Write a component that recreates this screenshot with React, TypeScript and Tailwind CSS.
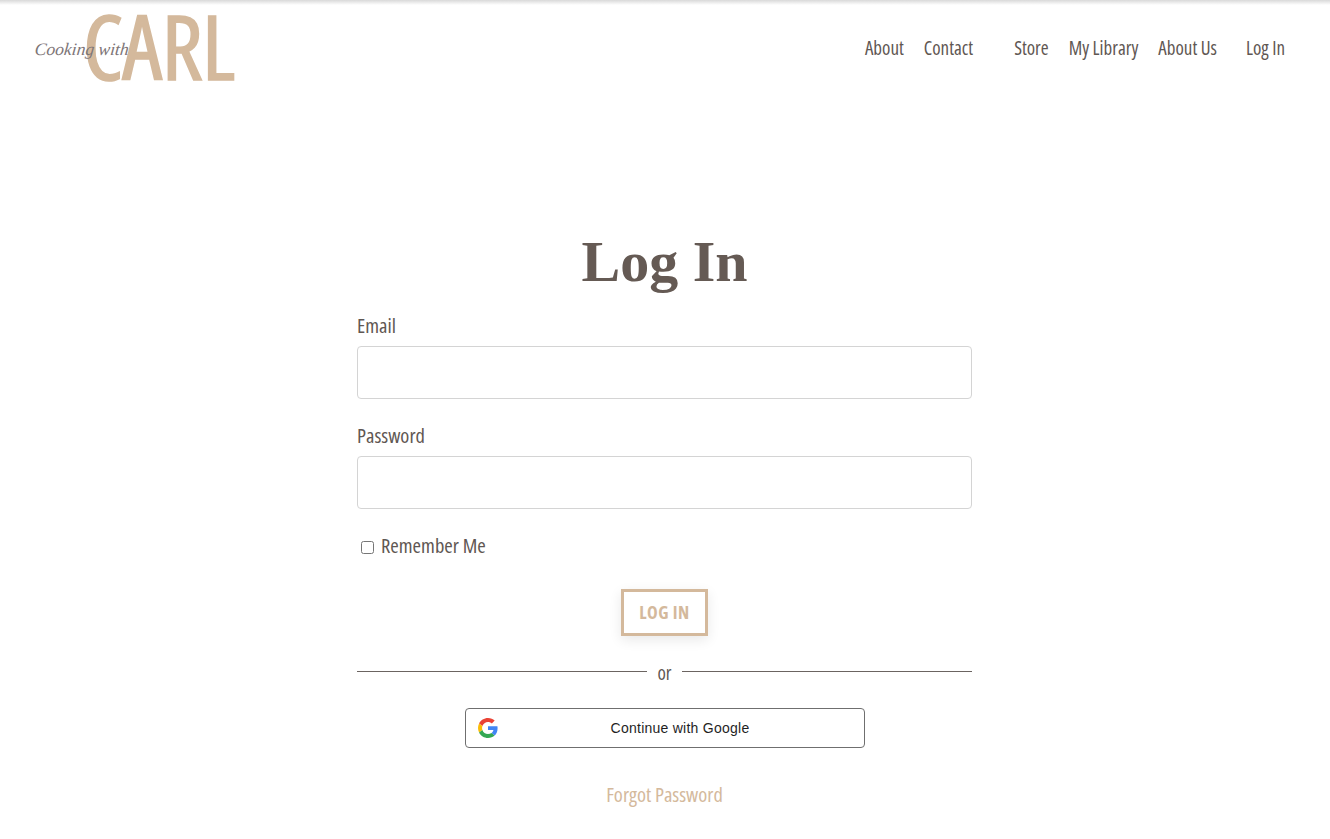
import React from 'react';

const condensed = "font-['Open_Sans',sans-serif] font-stretch-condensed";

function GoogleIcon() {
  return (
    <svg width="20" height="20" viewBox="0 0 48 48">
      <path fill="#EA4335" d="M24 9.5c3.54 0 6.71 1.22 9.21 3.6l6.85-6.85C35.9 2.38 30.47 0 24 0 14.62 0 6.51 5.38 2.56 13.22l7.98 6.19C12.43 13.72 17.74 9.5 24 9.5z" />
      <path fill="#4285F4" d="M46.98 24.55c0-1.57-.15-3.09-.38-4.55H24v9.02h12.94c-.58 2.96-2.26 5.48-4.78 7.18l7.73 6c4.51-4.18 7.09-10.36 7.09-17.65z" />
      <path fill="#FBBC05" d="M10.53 28.59c-.48-1.45-.76-2.99-.76-4.59s.27-3.14.76-4.59l-7.98-6.19C.92 16.46 0 20.12 0 24c0 3.88.92 7.54 2.56 10.78l7.97-6.19z" />
      <path fill="#34A853" d="M24 48c6.48 0 11.93-2.13 15.89-5.81l-7.73-6c-2.15 1.45-4.92 2.3-8.16 2.3-6.26 0-11.57-4.22-13.47-9.91l-7.98 6.19C6.51 42.62 14.62 48 24 48z" />
    </svg>
  );
}

function NavLink({ children, className = '' }: { children: React.ReactNode; className?: string }) {
  return <a className={`text-[19px] leading-6 text-[#5f5753] ${condensed} ${className}`}>{children}</a>;
}

function Field({ label }: { label: string }) {
  return (
    <div className="flex flex-col">
      <label className={`text-[20.5px] leading-[28px] text-[#5f5753] ${condensed}`}>{label}</label>
      <input className="mt-[7px] h-[53px] w-full rounded-[4px] border border-[#d4d4d4] bg-white" />
    </div>
  );
}

export default function App() {
  return (
    <div className="min-h-[839px] bg-white">
      <header className="flex h-[100px] items-start justify-between bg-[linear-gradient(#d9d9d9,#ffffff_5px)] pl-[35px] pr-[45px]">
        <div className="relative mt-[4px] h-[84px] w-[210px]">
          <span className={`absolute left-[48px] top-[-5px] text-[90px] leading-[92px] tracking-[-0.5px] text-[#d4b99c] [-webkit-text-stroke:1.5px_#d4b99c] ${condensed}`}>CARL</span>
          <span className="absolute left-0 top-[30px] -skew-x-6 text-[17.5px] italic leading-[30px] text-[#7d7577] font-['Liberation_Serif',serif]">Cooking with</span>
        </div>
        <nav className="mt-[36px] flex items-center">
          <NavLink>About</NavLink>
          <NavLink className="ml-5">Contact</NavLink>
          <NavLink className="ml-[41px]">Store</NavLink>
          <NavLink className="ml-5">My Library</NavLink>
          <NavLink className="ml-5">About Us</NavLink>
          <NavLink className="ml-[29px]">Log In</NavLink>
        </nav>
      </header>

      <main className="ml-[357px] flex w-[615px] flex-col pt-[124px]">
        <h1 className="text-center text-[58px] font-bold leading-[76px] text-[#655a54] font-['Liberation_Serif',serif]">Log In</h1>
        <div className="mt-[11px] flex flex-col gap-[22px]">
          <Field label="Email" />
          <Field label="Password" />
        </div>
        <label className="mt-[22px] flex items-center pl-1">
          <input type="checkbox" className="mt-[2px] h-[13px] w-[13px]" />
          <span className={`mb-[2px] ml-[7px] text-[20.5px] leading-[28px] text-[#5f5753] ${condensed}`}>Remember Me</span>
        </label>
        <button className={`mx-auto mt-[28px] h-[47px] w-[87px] border-[3px] border-[#d4b99c] text-[18px] font-bold tracking-[0.5px] text-[#d4b99c] shadow-[0_4px_12px_rgba(0,0,0,0.09)] ${condensed}`}>
          LOG IN
        </button>
        <div className="mt-[21px] flex items-center">
          <div className="h-px flex-1 bg-[#6b6461]" />
          <span className={`mt-1 px-[10px] text-[19px] leading-6 text-[#5f5753] ${condensed}`}>or</span>
          <div className="h-px flex-1 bg-[#6b6461]" />
        </div>
        <button className="relative ml-[108px] mt-[23px] flex h-[40px] w-[400px] items-center justify-center rounded-[4px] border border-[#6f6f6f] pl-[30px] text-[14px] tracking-[0.25px] text-[#1f1f1f] font-['Liberation_Sans',sans-serif]">
          <span className="absolute left-[12px] top-[9px]"><GoogleIcon /></span>
          Continue with Google
        </button>
        <a className={`mt-[31px] text-center text-[20.5px] leading-[30px] text-[#d4b99c] ${condensed}`}>Forgot Password</a>
      </main>
    </div>
  );
}
